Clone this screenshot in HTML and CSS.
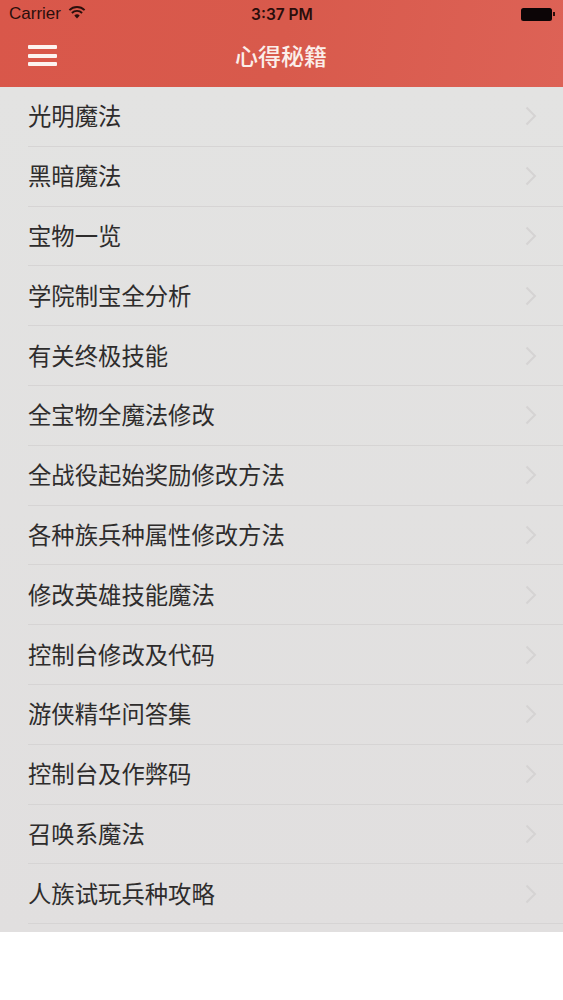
FILE: index.html
```html
<!DOCTYPE html>
<html lang="zh-CN">
<head>
<meta charset="utf-8">
<title>心得秘籍</title>
<link rel="stylesheet" href="styles.css">
</head>
<body>
<div class="screen">
  <header class="top">
    <div class="status">
      <div class="status-left">
        <span>Carrier</span>
        <svg class="wifi" width="18" height="13" viewBox="0 0 18 13"><path d="M9 12.6 6.3 9.5a3.9 3.9 0 0 1 5.4 0z" fill="#2a0f0c"/><path d="M3.900 7a7.200 7.200 0 0 1 10.200 0M1.400 4.200a10.800 10.800 0 0 1 15.200 0" fill="none" stroke="#2a0f0c" stroke-width="1.900"/></svg>
      </div>
      <div class="status-time">3:37 PM</div>
      <div class="battery"><span class="battery-body"></span><span class="battery-tip"></span></div>
    </div>
    <div class="nav">
      <div class="menu"><span></span><span></span><span></span></div>
      <h1 class="title">心得秘籍</h1>
    </div>
  </header>
  <ul class="list">
    <li class="row"><span>光明魔法</span><svg class="chev" viewBox="0 0 12 20"><path d="M1.500 1.500 10 10l-8.500 8.500"/></svg></li>
    <li class="row"><span>黑暗魔法</span><svg class="chev" viewBox="0 0 12 20"><path d="M1.500 1.500 10 10l-8.500 8.500"/></svg></li>
    <li class="row"><span>宝物一览</span><svg class="chev" viewBox="0 0 12 20"><path d="M1.500 1.500 10 10l-8.500 8.500"/></svg></li>
    <li class="row"><span>学院制宝全分析</span><svg class="chev" viewBox="0 0 12 20"><path d="M1.500 1.500 10 10l-8.500 8.500"/></svg></li>
    <li class="row"><span>有关终极技能</span><svg class="chev" viewBox="0 0 12 20"><path d="M1.500 1.500 10 10l-8.500 8.500"/></svg></li>
    <li class="row"><span>全宝物全魔法修改</span><svg class="chev" viewBox="0 0 12 20"><path d="M1.500 1.500 10 10l-8.500 8.500"/></svg></li>
    <li class="row"><span>全战役起始奖励修改方法</span><svg class="chev" viewBox="0 0 12 20"><path d="M1.500 1.500 10 10l-8.500 8.500"/></svg></li>
    <li class="row"><span>各种族兵种属性修改方法</span><svg class="chev" viewBox="0 0 12 20"><path d="M1.500 1.500 10 10l-8.500 8.500"/></svg></li>
    <li class="row"><span>修改英雄技能魔法</span><svg class="chev" viewBox="0 0 12 20"><path d="M1.500 1.500 10 10l-8.500 8.500"/></svg></li>
    <li class="row"><span>控制台修改及代码</span><svg class="chev" viewBox="0 0 12 20"><path d="M1.500 1.500 10 10l-8.500 8.500"/></svg></li>
    <li class="row"><span>游侠精华问答集</span><svg class="chev" viewBox="0 0 12 20"><path d="M1.500 1.500 10 10l-8.500 8.500"/></svg></li>
    <li class="row"><span>控制台及作弊码</span><svg class="chev" viewBox="0 0 12 20"><path d="M1.500 1.500 10 10l-8.500 8.500"/></svg></li>
    <li class="row"><span>召唤系魔法</span><svg class="chev" viewBox="0 0 12 20"><path d="M1.500 1.500 10 10l-8.500 8.500"/></svg></li>
    <li class="row"><span>人族试玩兵种攻略</span><svg class="chev" viewBox="0 0 12 20"><path d="M1.500 1.500 10 10l-8.500 8.500"/></svg></li>
  </ul>
</div>
</body>
</html>
```
FILE: styles.css
```css
* { box-sizing: border-box; }
html, body { margin: 0; padding: 0; background: #fff; }
body { font-family: "Noto Sans CJK SC", "Liberation Sans", sans-serif; }
.screen { width: 563px; height: 1000px; overflow: hidden; background: #fff; }
.top {
  height: 87px;
  background: linear-gradient(100deg, #d9574a 0%, #d85a4c 50%, #dd6256 100%);
  padding: 0 8px 0 9px;
  display: flex;
  flex-direction: column;
}
.status {
  height: 28px;
  display: grid;
  grid-template-columns: 1fr auto 1fr;
  align-items: center;
  font-family: "Liberation Sans", sans-serif;
  font-size: 17px;
  color: #2a0f0c;
}
.status-left { display: flex; align-items: center; gap: 7px; }
.wifi { margin-top: -3px; }
.status-time { font-family: Inter, "Liberation Sans", sans-serif; font-weight: 600; color: #2a0d0b; font-size: 15.500px; }
.battery { display: flex; align-items: center; justify-content: flex-end; }
.battery-body { width: 31px; height: 13px; background: #0c0506; border-radius: 2.500px; }
.battery-tip { width: 2px; height: 4px; background: #2a0f0c; margin-left: 1px; }
.nav {
  height: 59px;
  display: flex;
  align-items: center;
  justify-content: center;
  position: relative;
}
.menu {
  position: absolute;
  left: 19px;
  top: 17px;
  width: 29px;
  display: flex;
  flex-direction: column;
  gap: 4.500px;
}
.menu span { display: block; height: 4px; background: #fdf3f0; border-radius: 1px; }
.title { margin: 0; font-size: 23px; font-weight: 500; line-height: 1.2; color: #fbeeea; position: relative; top: -2px; left: -1px; }
.list {
  margin: 0;
  padding: 0 0 8px;
  list-style: none;
  height: 845px;
  background: linear-gradient(180deg, #e3e3e2 0%, #e1dfdf 100%);
}
.row {
  height: 59.800px;
  margin-left: 28px;
  padding: 0 26px 0 0;
  display: flex;
  align-items: center;
  justify-content: space-between;
  border-bottom: 1px solid #d6d4d4;
  font-size: 23.350px;
  color: #2e2c2c;
}
.row span { position: relative; top: -1px; }
.chev { width: 12px; height: 20px; fill: none; stroke: #d5d3d3; stroke-width: 2; }
```
